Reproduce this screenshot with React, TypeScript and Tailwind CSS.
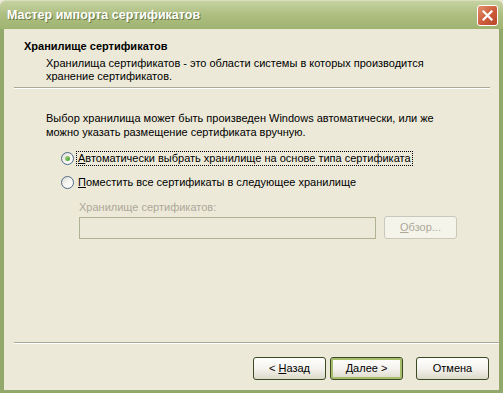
import React, { FC, ReactElement } from 'react'

const font = { fontFamily: 'Tahoma, "Liberation Sans", Arial, sans-serif' }

const Radio: FC<{ checked?: boolean }> = ({ checked }): ReactElement => (
  <span className="relative flex h-[13px] w-[13px] shrink-0 items-center justify-center rounded-full border border-[#4c6a87] bg-gradient-to-br from-[#dcdad0] via-[#f6f5ef] to-white">
    {checked && (
      <span className="h-[5px] w-[5px] rounded-full bg-gradient-to-br from-[#a6d486] to-[#3c9a1c]" />
    )}
  </span>
)

const Button: FC<{
  children: React.ReactNode
  isDefault?: boolean
  disabled?: boolean
}> = ({ children, isDefault, disabled }): ReactElement => (
  <div
    className={`flex h-[23px] w-[73px] items-center justify-center rounded-[3px] border text-[11px] ${
      disabled
        ? 'border-[#cac8bb] bg-[#f5f4ea] text-[#aca899]'
        : 'border-[#3c4a24] bg-gradient-to-b from-white via-[#f4f3ee] to-[#dcd9c9] text-black'
    } ${isDefault ? 'shadow-[inset_0_0_0_2px_#a6bd6c]' : ''}`}
  >
    {children}
  </div>
)

const App: FC = (): ReactElement => {
  return (
    <div className="flex h-[393px] w-[503px] flex-col overflow-hidden bg-[#ece9d8]" style={font}>
      {/* title bar */}
      <div className="flex h-[29px] shrink-0 items-center justify-between rounded-t-[6px] border-t border-[#d7e0bb] bg-gradient-to-b from-[#c6d2a2] via-[#adbe80] to-[#a0b472] pl-[7px] pr-[5px]">
        <span
          className="text-[12.5px] font-bold text-white [text-shadow:1px_1px_0_#6a7a44]"
          style={{ fontFamily: '"Liberation Sans", Arial, sans-serif' }}
        >
          Мастер импорта сертификатов
        </span>
        <div className="flex h-[21px] w-[21px] items-center justify-center rounded-[3px] border border-white bg-gradient-to-br from-[#e0906e] via-[#cf5f3c] to-[#b8442a]">
          <svg width="11" height="11" viewBox="0 0 11 11">
            <path d="M1.5 1.5 L9.5 9.5 M9.5 1.5 L1.5 9.5" stroke="white" strokeWidth="2.2" strokeLinecap="square" />
          </svg>
        </div>
      </div>

      {/* frame */}
      <div className="flex flex-1 flex-col border-x-[4px] border-b-[3px] border-[#93a86b]">
        {/* header */}
        <div className="flex flex-col pl-[20px] pr-[10px] pt-[11px]">
          <div className="text-[11px] font-bold leading-[13px] text-black">Хранилище сертификатов</div>
          <div className="mt-[4px] pl-[22px] text-[11px] leading-[13px] text-black">
            Хранилища сертификатов - это области системы в которых производится
            <br />
            хранение сертификатов.
          </div>
        </div>
        <div className="ml-[10px] mr-[9px] mt-[4px] h-[2px] border-t border-b border-t-[#aca899] border-b-white" />

        {/* body */}
        <div className="flex flex-1 flex-col pl-[42px] pr-[20px] pt-[22px]">
          <div className="text-[11px] leading-[14px] text-black">
            Выбор хранилища может быть произведен Windows автоматически, или же
            <br />
            можно указать размещение сертификата вручную.
          </div>
          <div className="mt-[12px] flex flex-col gap-[10px] pl-[15px]">
            <div className="flex h-[14px] items-center gap-[2px]">
              <Radio checked />
              <span className="border border-dotted border-black px-[1px] text-[11px] leading-[13px] text-black">
                <u>А</u>втоматически выбрать хранилище на основе типа сертификата
              </span>
            </div>
            <div className="flex h-[14px] items-center gap-[3px]">
              <Radio />
              <span className="px-[1px] text-[11px] leading-[13px] text-black">
                <u>П</u>оместить все сертификаты в следующее хранилище
              </span>
            </div>
          </div>
          <div className="mt-[12px] pl-[33px]">
            <div className="text-[11px] leading-[13px] text-[#aca899]">Хранилище сертификатов:</div>
            <div className="mt-[2px] flex items-center gap-[8px]">
              <div className="h-[22px] w-[297px] border border-[#aeb48f] bg-[#ece9d8]" />
              <Button disabled>
                <span>
                  <u>О</u>бзор...
                </span>
              </Button>
            </div>
          </div>
        </div>

        {/* footer */}
        <div className="ml-[10px] h-[2px] border-t border-b border-t-[#aca899] border-b-white" />
        <div className="flex h-[46px] items-center justify-end gap-[4px] pr-[10px] pt-[2px]">
          <Button>
            <span>
              &lt; <u>Н</u>азад
            </span>
          </Button>
          <Button isDefault>
            <span>
              <u>Д</u>алее &gt;
            </span>
          </Button>
          <div className="w-[5px]" />
          <Button>Отмена</Button>
        </div>
      </div>
    </div>
  )
}

export default App
